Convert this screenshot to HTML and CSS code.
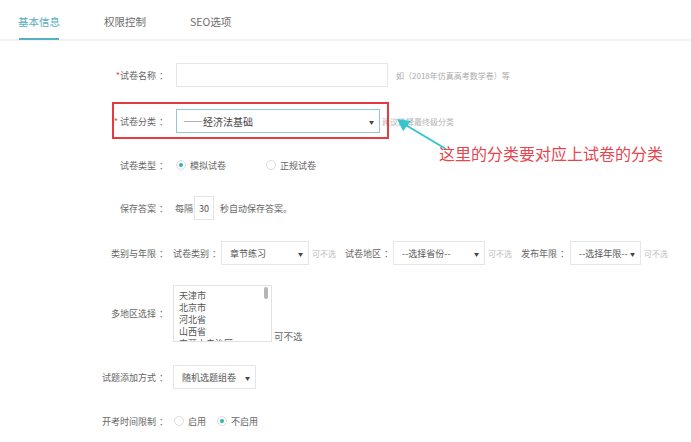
FILE: index.html
```html
<!DOCTYPE html>
<html lang="zh-CN">
<head>
    <meta charset="UTF-8">
    <meta name="viewport" content="width=device-width, initial-scale=1.0">
    <title>试卷设置</title>
    <link rel="stylesheet" href="styles.css">
</head>
<body>

    <!-- Tabs -->
    <div class="tabs">
        <div class="tab active">基本信息</div>
        <div class="tab">权限控制</div>
        <div class="tab">SEO选项</div>
    </div>

    <div class="form">

        <div class="row row-name">
            <div class="label"><span class="req">*</span>试卷名称<span class="colon">：</span></div>
            <div class="control wide">
                <div class="input name-input"></div>
                <span class="hint">如（2018年仿真高考数学卷）等</span>
            </div>
        </div>

        <div class="row row-cat">
            <div class="mark-box"></div>
            <div class="label"><span class="req">*</span> 试卷分类<span class="colon">：</span></div>
            <div class="control wide">
                <div class="select cat-select focus"><span><em class="dash">——</em>经济法基础</span><i class="caret">▼</i></div>
                <span class="hint">建议选择最终级分类</span>
            </div>
            <!-- annotation -->
            <svg class="arrow" width="60" height="40" viewBox="0 0 60 40">
                <line x1="50" y1="31" x2="8" y2="6" stroke="#34c5cf" stroke-width="2"/>
                <polygon points="1,1 15,3 7,13" fill="#34c5cf"/>
            </svg>
            <div class="note">这里的分类要对应上试卷的分类</div>
        </div>

        <div class="row row-type">
            <div class="label">试卷类型<span class="colon">：</span></div>
            <div class="control">
                <label class="radio"><i class="dot on"></i>模拟试卷</label>
                <label class="radio second"><i class="dot"></i>正规试卷</label>
            </div>
        </div>

        <div class="row row-save">
            <div class="label">保存答案<span class="colon">：</span></div>
            <div class="control">
                <span>每隔</span>
                <div class="input sec-input">30</div>
                <span>秒自动保存答案。</span>
            </div>
        </div>

        <div class="row row-year">
            <div class="label">类别与年限<span class="colon">：</span></div>
            <div class="control">
                <span class="sub first">试卷类别<span class="colon">：</span></span>
                <div class="select s-kind"><span>章节练习</span><i class="caret">▼</i></div>
                <span class="opt">可不选</span>
                <span class="sub">试卷地区<span class="colon">：</span></span>
                <div class="select s-area"><span>--选择省份--</span><i class="caret">▼</i></div>
                <span class="opt">可不选</span>
                <span class="sub">发布年限<span class="colon">：</span></span>
                <div class="select s-year"><span>--选择年限--</span><i class="caret">▼</i></div>
                <span class="opt">可不选</span>
            </div>
        </div>

        <div class="row row-multi">
            <div class="label">多地区选择<span class="colon">：</span></div>
            <div class="control bottom">
                <div class="listbox">
                    <div class="item">天津市</div>
                    <div class="item">北京市</div>
                    <div class="item">河北省</div>
                    <div class="item">山西省</div>
                    <div class="item">内蒙古自治区</div>
                    <div class="thumb"></div>
                </div>
                <span class="opt-dark">可不选</span>
            </div>
        </div>

        <div class="row row-mode">
            <div class="label">试题添加方式<span class="colon">：</span></div>
            <div class="control">
                <div class="select s-mode"><span>随机选题组卷</span><i class="caret">▼</i></div>
            </div>
        </div>

        <div class="row row-time">
            <div class="label">开考时间限制<span class="colon">：</span></div>
            <div class="control">
                <label class="radio"><i class="dot"></i>启用</label>
                <label class="radio third"><i class="dot on"></i>不启用</label>
            </div>
        </div>

    </div>

</body>
</html>
```

FILE: styles.css
```css
body { margin: 0; font-family: "Noto Sans CJK SC", "Liberation Sans", sans-serif; background: #fff; color: #666; font-size: 9px; overflow: hidden; }

/* tabs */
.tabs { display: flex; gap: 44px; padding-left: 18px; height: 39px; border-bottom: 2px solid #f1f3f3; }
.tab { position: relative; font-size: 10.5px; line-height: 10px; padding-top: 17px; color: #6b6b6b; }
.tab.active { color: #54aebf; }
.tab.active::after { content: ""; position: absolute; left: 1px; right: 1px; top: 38px; height: 2px; background: #56b1c1; }

/* form rows */
.form { padding-top: 11px; }
.row { position: relative; display: flex; align-items: center; }
.row-name { height: 46px; }
.row-cat { height: 46px; }
.row-type { height: 42px; }
.row-save { height: 44px; }
.row-year { height: 46px; }
.row-multi { height: 74px; }
.row-mode { height: 54px; }
.row-time { height: 34px; }

.label { width: 165px; flex: none; text-align: right; color: #666; }
.colon { margin-left: 3px; margin-right: -3px; }
.req { color: #e84848; }
.control { display: flex; align-items: center; margin-left: 8px; white-space: nowrap; }
.control > * { flex: none; }
.control.wide { margin-left: 11px; }
.control.bottom { align-items: flex-end; }

.input { box-sizing: border-box; border: 1px solid #e6e6e6; background: #fff; }
.name-input { width: 212px; height: 24px; }
.hint { margin-left: 8px; font-size: 8px; color: #a9a9a9; }
.row-cat .hint { margin-left: 2px; color: #b4b4b4; }

.select { box-sizing: border-box; display: flex; align-items: center; justify-content: space-between; height: 24px; padding: 0 5px 0 8px; border: 1px solid #e6e6e6; background: #fff; color: #555; }
.select.focus { border-color: #8fc9d2; }
.caret { font-style: normal; font-size: 5px; color: #444; }
.cat-select { width: 204px; padding-left: 6px; color: #444; font-size: 10px; }
.dash { font-style: normal; color: #777; }

/* radios */
.radio { display: flex; align-items: center; color: #666; }
.dot { box-sizing: border-box; width: 10px; height: 10px; margin-right: 4px; border: 1px solid #dcdcdc; border-radius: 50%; display: flex; align-items: center; justify-content: center; }
.dot.on::after { content: ""; width: 4px; height: 4px; border-radius: 50%; background: #2fb6a8; }
.radio.second { margin-left: 40px; }
.radio.third { margin-left: 11px; }
.row-type .control { margin-left: 11px; }
.row-time .control { margin-left: 9px; }

.row-save .control { margin-left: 10px; }
.sec-input { width: 20px; height: 24px; margin: 0 6px 0 1px; display: flex; align-items: center; justify-content: center; color: #555; }

/* category / year selects */
.s-kind { width: 88px; margin-left: 3px; }
.s-area { width: 92px; margin-left: 3px; }
.s-year { width: 71px; margin-left: 4px; }
.opt { font-size: 8px; color: #bdbdbd; margin-left: 3px; }
.sub { margin-left: 9px; }
.sub.first { margin-left: 0; }

/* multi listbox */
.listbox { position: relative; box-sizing: border-box; width: 99px; height: 57px; border: 1px solid #e2e2e2; padding: 4px 0 0 5px; overflow: hidden; color: #555; font-size: 9px; }
.item { height: 12px; line-height: 12px; }
.thumb { position: absolute; right: 3px; top: 1px; width: 4px; height: 12px; border-radius: 2px; background: #b5b5b5; }
.opt-dark { margin-left: 2px; font-size: 9.5px; color: #666; line-height: 11px; }

.s-mode { width: 83px; }

/* annotations */
.mark-box { position: absolute; left: 112px; top: 4px; width: 277px; height: 37px; box-sizing: border-box; border: 2px solid #e53a3f; }
.arrow { position: absolute; left: 396px; top: 20px; }
.note { position: absolute; left: 439px; top: 45px; font-size: 16px; line-height: 20px; color: #e64650; white-space: nowrap; }
```
